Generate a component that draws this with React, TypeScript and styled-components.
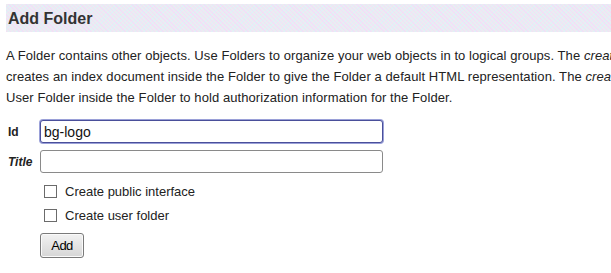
import React from "react";
import styled, { createGlobalStyle } from "styled-components";

const Global = createGlobalStyle`
  html, body { margin: 0; padding: 0; background: #fff; overflow: hidden; }
  body { font-family: "Liberation Sans", Arial, sans-serif; color: #222; }
`;

const Page = styled.div`
  width: 611px;
  height: 273px;
  overflow: hidden;
  padding-top: 4px;
  box-sizing: border-box;
`;

const TitleBar = styled.div`
  margin-left: 6px;
  height: 28px;
  display: flex;
  align-items: center;
  padding-left: 2px;
  padding-top: 2px;
  box-sizing: border-box;
  background-color: #ecebf1;
  background-image:
    repeating-linear-gradient(45deg, rgba(255, 200, 255, 0.35) 0 1px, transparent 1px 3px),
    repeating-linear-gradient(-45deg, rgba(200, 255, 255, 0.35) 0 1px, transparent 1px 3px);
`;

const Heading = styled.h2`
  margin: 0;
  font-size: 16px;
  font-weight: bold;
  color: #333;
`;

const Intro = styled.p`
  margin: 13px 0 0 6px;
  font-size: 13px;
  line-height: 21px;
  letter-spacing: 0.08px;
  white-space: nowrap;
  color: #222;
`;

const Form = styled.div`
  margin-top: 12px;
  margin-left: 8px;
  display: grid;
  grid-template-columns: 32px 343px;
  row-gap: 7px;
  align-items: center;
`;

const Label = styled.label<{ $italic?: boolean }>`
  font-size: 12px;
  font-weight: bold;
  font-style: ${(p) => (p.$italic ? "italic" : "normal")};
  color: #222;
`;

const TextInput = styled.input<{ $focused?: boolean }>`
  box-sizing: border-box;
  width: 343px;
  height: 23px;
  margin: 0;
  padding: 1px 3px;
  font-family: "Liberation Sans", Arial, sans-serif;
  font-size: 14px;
  color: #111;
  border-radius: 3px;
  outline: none;
  border: 1px solid ${(p) => (p.$focused ? "#4a4f9a" : "#8a8a8a")};
  box-shadow: ${(p) => (p.$focused ? "0 0 0 1px #9aa0d8" : "inset 0 0 0 0 transparent")};
  background: #fff;
`;

const Options = styled.div`
  margin-top: 12px;
  margin-left: 44px;
  display: flex;
  flex-direction: column;
  gap: 11px;
`;

const Option = styled.label`
  display: flex;
  align-items: center;
  gap: 8px;
  font-size: 13px;
  color: #222;
  height: 13px;
`;

const Box = styled.span`
  width: 11px;
  height: 11px;
  border: 1px solid #6b6b6b;
  background: #fff;
  flex: none;
`;

const Button = styled.button`
  display: block;
  margin: 11px 0 0 40px;
  width: 44px;
  height: 25px;
  padding: 0;
  font-family: "Liberation Sans", Arial, sans-serif;
  font-size: 13px;
  letter-spacing: -0.6px;
  color: #000;
  border: 1px solid #7a7a7a;
  border-radius: 3px;
  background: linear-gradient(#f2f2f2, #d6d6d6);
  box-shadow: inset 0 0 0 1px #fafafa;
`;

export default function App() {
  return (
    <Page>
      <Global />
      <TitleBar>
        <Heading>Add Folder</Heading>
      </TitleBar>
      <Intro>
        A Folder contains other objects. Use Folders to organize your web objects in to logical groups. The{" "}
        <em>create public interface</em> option
        <br />
        creates an index document inside the Folder to give the Folder a default HTML representation. The{" "}
        <em>create user folder</em> option creates a
        <br />
        User Folder inside the Folder to hold authorization information for the Folder.
      </Intro>
      <Form>
        <Label htmlFor="id">Id</Label>
        <TextInput id="id" $focused defaultValue="bg-logo" />
        <Label htmlFor="title" $italic>
          Title
        </Label>
        <TextInput id="title" />
      </Form>
      <Options>
        <Option>
          <Box />
          Create public interface
        </Option>
        <Option>
          <Box />
          Create user folder
        </Option>
      </Options>
      <Button>Add</Button>
    </Page>
  );
}
